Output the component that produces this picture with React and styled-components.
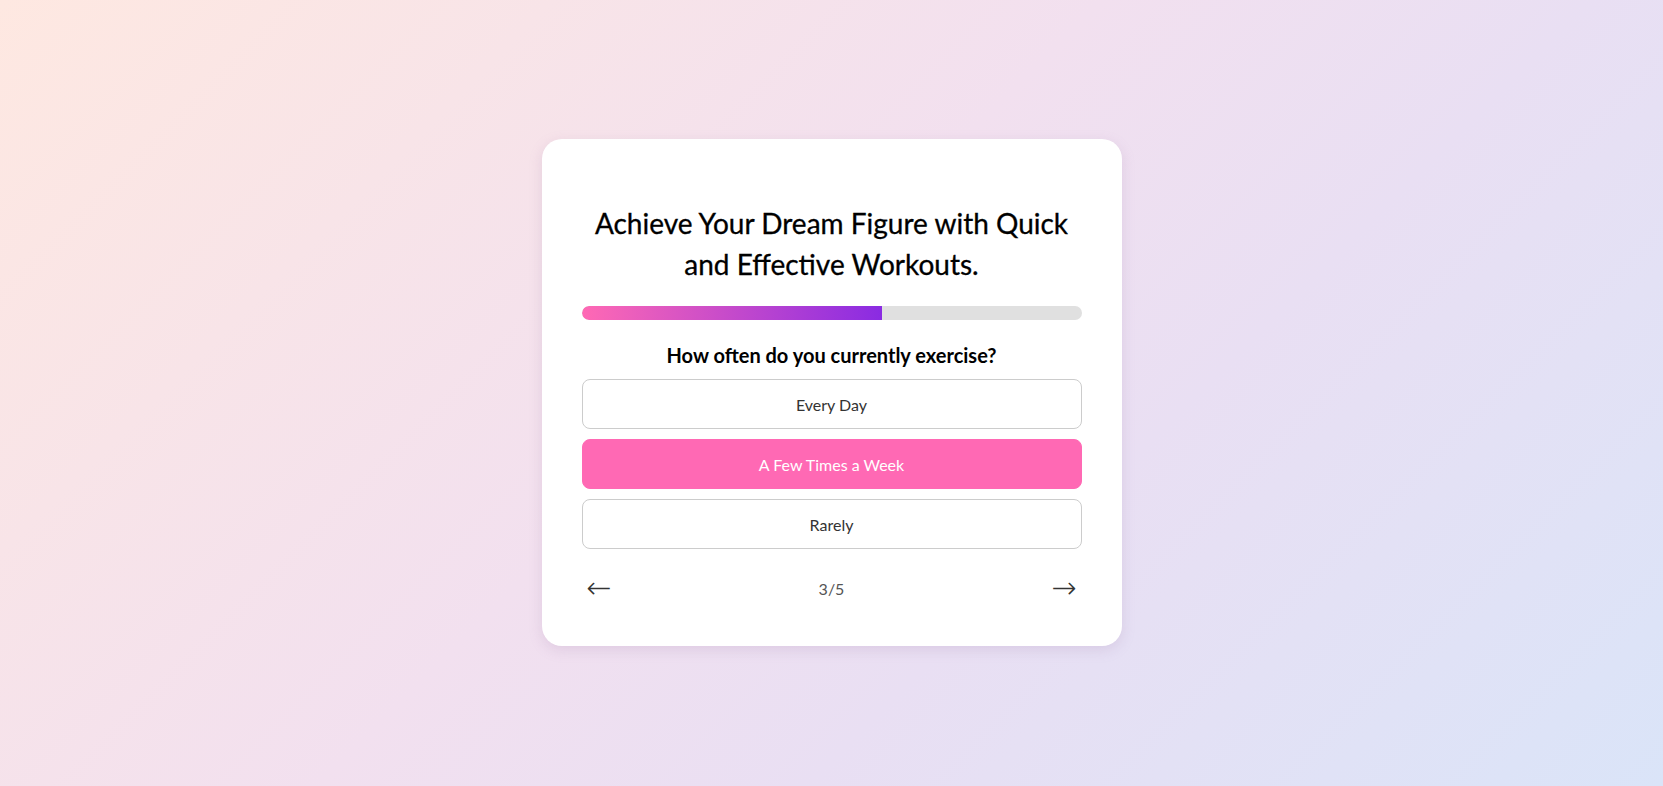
import React, { useState } from 'react'
import styled, { createGlobalStyle } from 'styled-components'

const GlobalStyle = createGlobalStyle`
    html, body {
        margin: 0;
        padding: 0;
    }
    body {
        font-family: Lato, "Open Sans", sans-serif;
        background: linear-gradient(135deg, #fee8e1 0%, #f2e0ef 45%, #e9dff3 65%, #dae4f8 100%);
        min-height: 100vh;
    }
`

const options = ['Every Day', 'A Few Times a Week', 'Rarely']

function App() {
    const [selected, setSelected] = useState(1)
    const step = 3
    const total = 5

    return (
        <>
            <GlobalStyle />
            <Page>
                <Card>
                    <Title>Achieve Your Dream Figure with Quick and Effective Workouts.</Title>

                    <Track>
                        <Fill style={{ width: `${(step / total) * 100}%` }} />
                    </Track>

                    <Question>How often do you currently exercise?</Question>

                    <Options>
                        {options.map((opt, i) => (
                            <Option
                                key={opt}
                                $active={i === selected}
                                onClick={() => setSelected(i)}
                            >
                                {opt}
                            </Option>
                        ))}
                    </Options>

                    <Nav>
                        <Arrow>&larr;</Arrow>
                        <Counter>{step}/{total}</Counter>
                        <Arrow>&rarr;</Arrow>
                    </Nav>
                </Card>
            </Page>
        </>
    )
}

export default App

const Page = styled.div`
    height: 786px;
    display: flex;
    justify-content: center;
    align-items: flex-start;
    padding-top: 139px;
    box-sizing: border-box;
`

const Card = styled.div`
    width: 580px;
    box-sizing: border-box;
    padding: 40px 40px 43px;
    background: #fff;
    border-radius: 20px;
    box-shadow: 0 4px 14px rgba(150, 110, 160, 0.18);
    display: flex;
    flex-direction: column;
`

const Title = styled.h2`
    margin: 24px 0 21px;
    font-size: 28px;
    line-height: 41px;
    font-weight: 400;
    color: #000;
    text-align: center;
    -webkit-text-stroke: 0.3px #000;
`

const Track = styled.div`
    height: 14px;
    border-radius: 7px;
    background: #e0e0e0;
    overflow: hidden;
`

const Fill = styled.div`
    height: 100%;
    border-radius: 7px 0 0 7px;
    background: linear-gradient(90deg, #ff69b4, #8a2be2);
`

const Question = styled.h3`
    margin: 23px 0 12px;
    font-size: 20px;
    line-height: 24px;
    font-weight: 700;
    color: #000;
    text-align: center;
`

const Options = styled.div`
    display: flex;
    flex-direction: column;
    gap: 10px;
`

const Option = styled.button`
    height: 50px;
    border-radius: 8px;
    border: 1px solid ${p => (p.$active ? '#ff69b4' : '#cccccc')};
    background: ${p => (p.$active ? '#ff69b4' : '#fff')};
    color: ${p => (p.$active ? '#fff' : '#333')};
    font-family: inherit;
    font-size: 16px;
    cursor: pointer;
`

const Nav = styled.div`
    margin-top: 24px;
    height: 30px;
    display: flex;
    align-items: center;
    justify-content: space-between;
    padding: 0 5px;
`

const Arrow = styled.span`
    font-family: "DejaVu Sans", sans-serif;
    font-size: 30px;
    line-height: 1;
    font-weight: 300;
    color: #333;
    cursor: pointer;
`

const Counter = styled.span`
    font-size: 16px;
    color: #555;
`
